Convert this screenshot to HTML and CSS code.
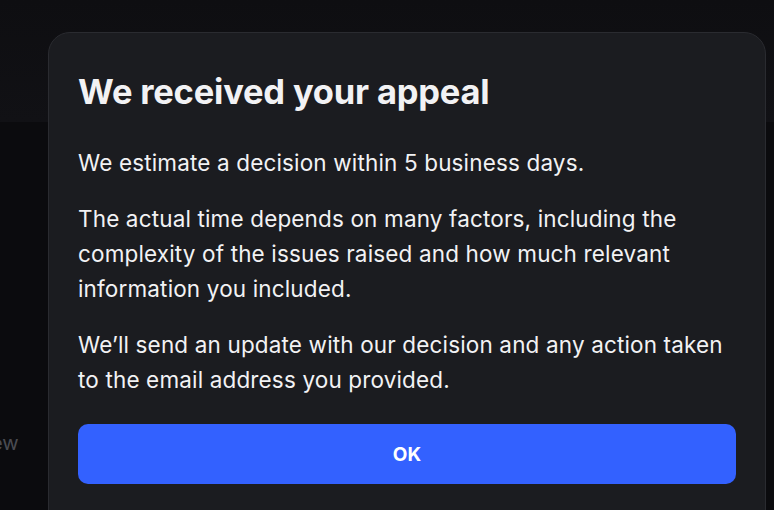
FILE: index.html
```html
<!DOCTYPE html>
<html lang="en">

<head>
    <meta charset="UTF-8">
    <title>Appeal received</title>
    <link rel="stylesheet" href="styles.css">
</head>

<body>
    <!-- page behind the overlay -->
    <div class="backdrop">
        <div class="backdrop-header"></div>
        <div class="backdrop-body">
            <span class="backdrop-link">ew</span>
        </div>
    </div>

    <!-- appeal dialog -->
    <div class="modal">
        <h1 class="modal-title">We received your appeal</h1>
        <p>We estimate a decision within 5 business days.</p>
        <p>The actual time depends on many factors, including the complexity of the issues raised and how much relevant information you included.</p>
        <p>We’ll send an update with our decision and any action taken to the email address you provided.</p>
        <button class="ok-button">OK</button>
    </div>
</body>

</html>
```

FILE: styles.css
```css
* {
    box-sizing: border-box;
    margin: 0;
    padding: 0;
}

body {
    font-family: 'Inter', 'Noto Sans', sans-serif;
    background-color: #0b0b0e;
    color: #f2f2f4;
    width: 774px;
    height: 510px;
    overflow: hidden;
    position: relative;
}

.backdrop {
    display: flex;
    flex-direction: column;
    height: 100%;
}

.backdrop-header {
    height: 122px;
    background: linear-gradient(180deg, #0e0e11 0%, #111115 100%);
}

.backdrop-body {
    flex: 1;
    background-color: #0b0b0e;
    padding-top: 309px;
}

.backdrop-link {
    display: block;
    margin-left: -9px;
    font-size: 20px;
    color: #4a4b52;
}

.modal {
    position: absolute;
    top: 32px;
    left: 48px;
    width: 718px;
    height: 520px;
    background-color: #1b1c20;
    border: 1px solid #2a2b30;
    border-radius: 22px;
    padding: 39px 29px;
}

.modal-title {
    font-size: 34.5px;
    font-weight: 700;
    line-height: 40px;
    letter-spacing: -0.2px;
    margin-bottom: 33px;
}

.modal p {
    font-size: 22.5px;
    line-height: 35px;
    letter-spacing: 0.15px;
    margin-bottom: 21px;
}

/* margin collapses with the paragraph above */
.ok-button {
    display: block;
    width: 100%;
    height: 60px;
    margin-top: 27px;
    background-color: #3361ff;
    color: #fff;
    border: none;
    border-radius: 10px;
    font-family: inherit;
    font-size: 19px;
    font-weight: 700;
}
```
